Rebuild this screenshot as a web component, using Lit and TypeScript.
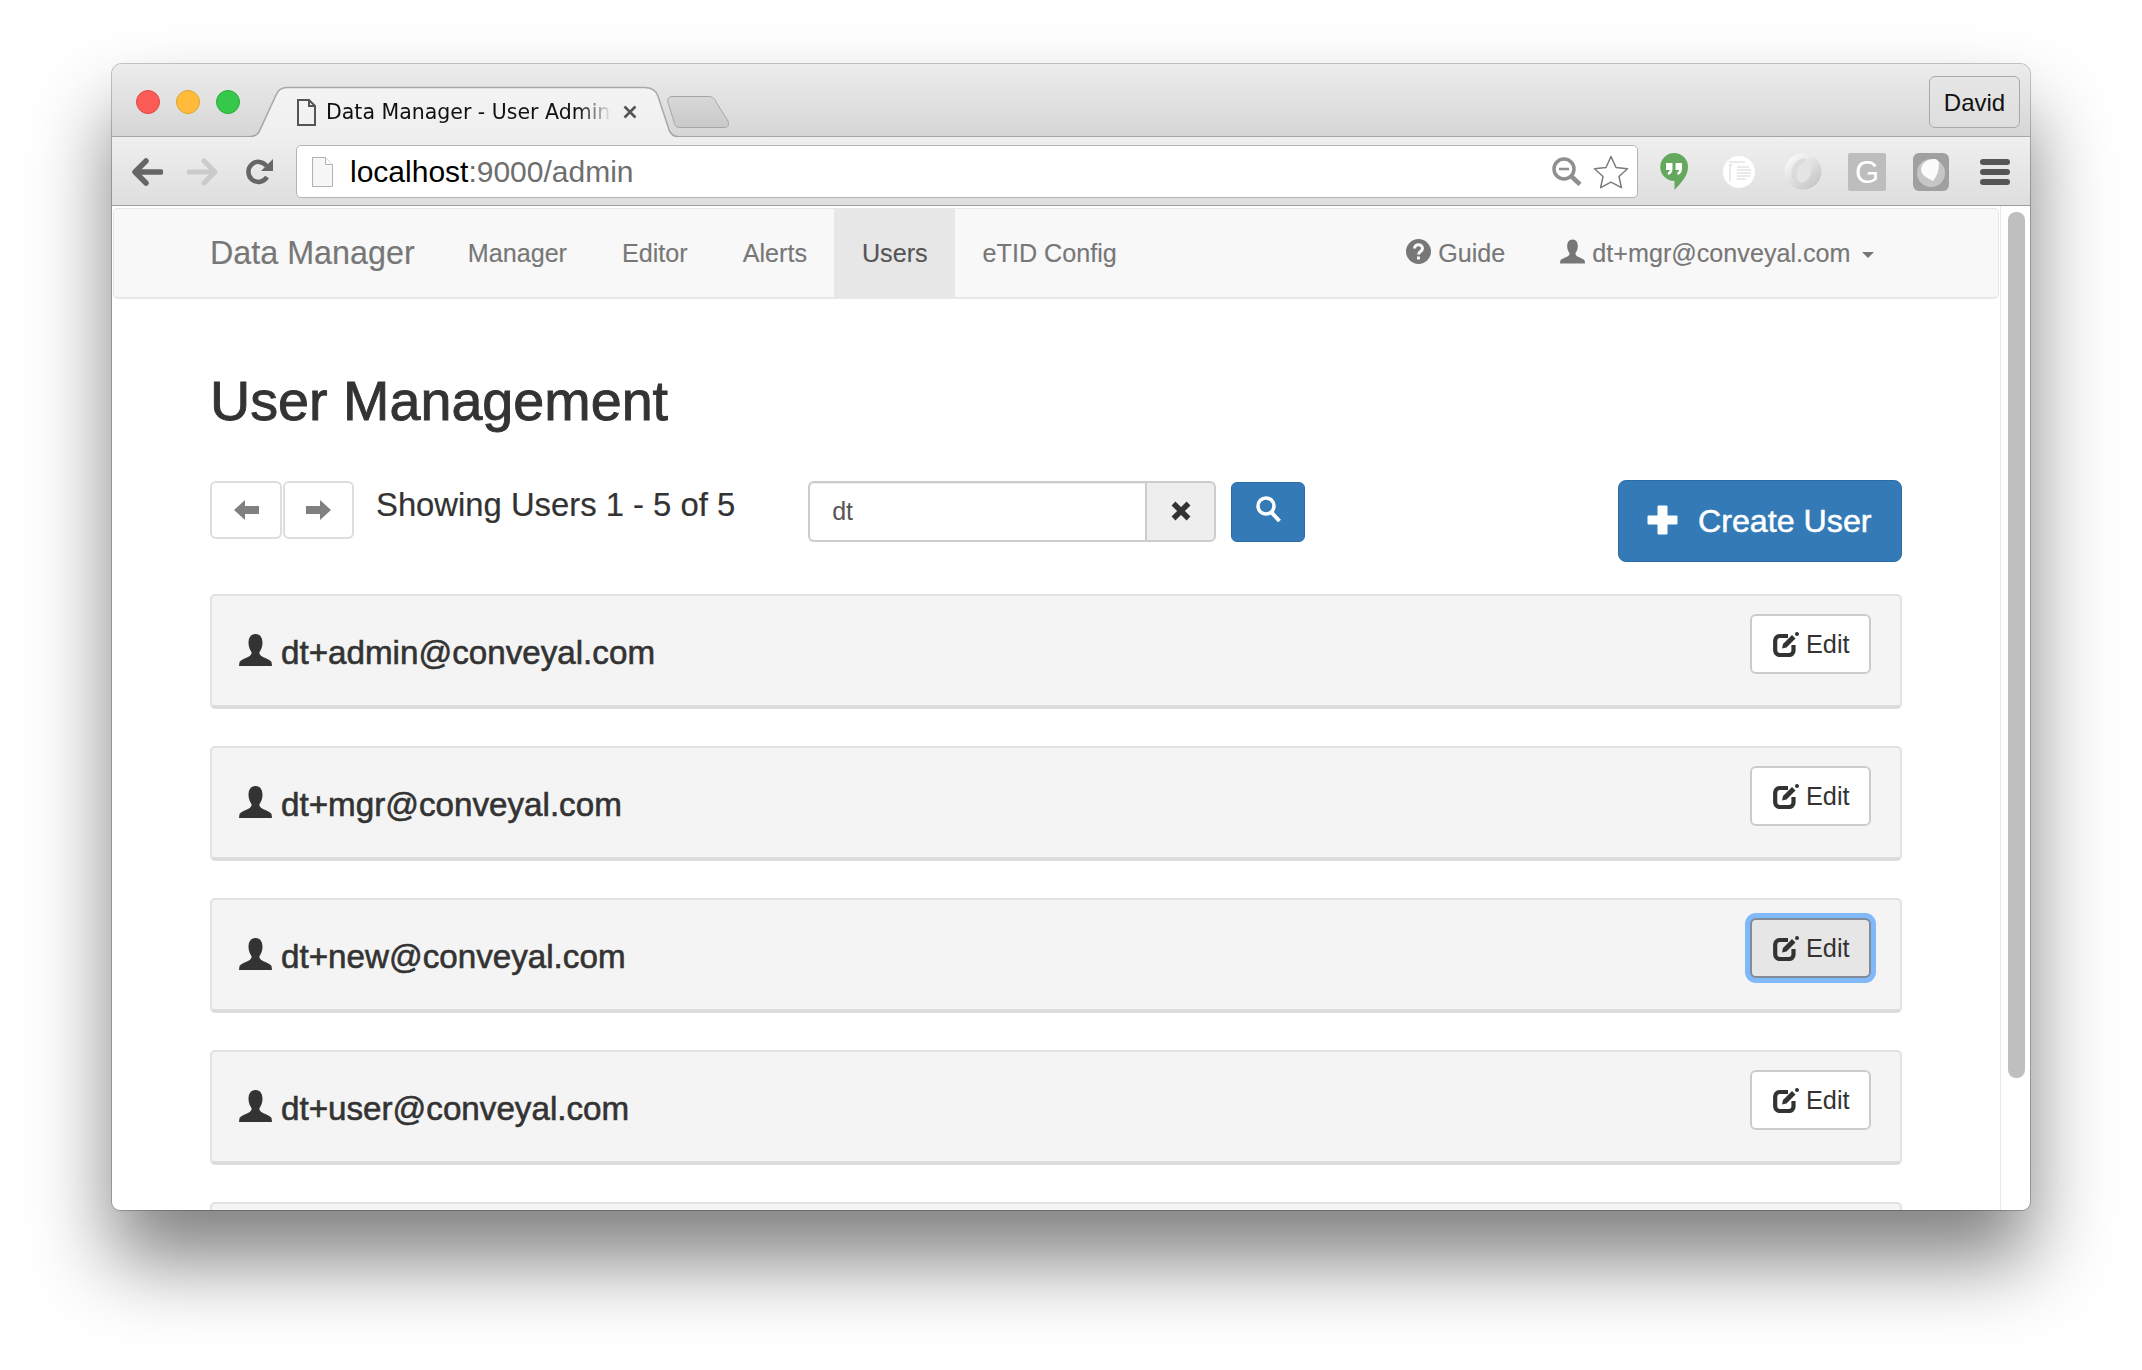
import { LitElement, html, css, svg } from "lit";
import { customElement } from "lit/decorators.js";
import { classMap } from "lit/directives/class-map.js";

const userIcon = svg`<path d="M16.5 0C11.5 0 9.5 4 9.5 9c0 4 1.500 7 3 9 .3 2-.5 3.500-3.500 5-4 2-7.500 3-8.500 5L0 32h33l-.5-4c-1-2-4.500-3-8.500-5-3-1.500-3.800-3-3.500-5 1.500-2 3-5 3-9 0-5-2-9-7-9z"/>`;

// the fifth row only shows its top edge above the window bottom, so it has no content
const USERS = [
  { email: "dt+admin@conveyal.com" },
  { email: "dt+mgr@conveyal.com" },
  { email: "dt+new@conveyal.com", focused: true },
  { email: "dt+user@conveyal.com" },
  { email: "" },
];

@customElement("app-root")
export class AppRoot extends LitElement {
  static styles = css`
    :host {
      display: block;
      width: 2142px;
      height: 1370px;
      padding: 64px 0 0 112px;
      box-sizing: border-box;
      background: #fff;
      overflow: hidden;
      font-family: "Liberation Sans", Arial, sans-serif;
      color: #333;
    }
    .window {
      width: 1918px;
      height: 1146px;
      display: flex;
      flex-direction: column;
      overflow: hidden;
      background: #fff;
      border-radius: 10px 10px 8px 8px;
      box-shadow: 0 0 0 1px rgba(0, 0, 0, 0.22), 0 50px 80px rgba(0, 0, 0, 0.5);
    }

    /* browser chrome */
    .titlebar {
      height: 73px;
      flex: none;
      box-sizing: border-box;
      display: flex;
      align-items: flex-end;
      background: linear-gradient(#ececec, #d6d6d6);
      border-bottom: 1px solid #a6a6a6;
    }
    .lights {
      display: flex;
      gap: 16px;
      align-self: flex-start;
      margin: 26px 10px 0 24px;
    }
    .light {
      width: 24px;
      height: 24px;
      box-sizing: border-box;
      border-radius: 50%;
      border: 1px solid;
    }
    .light.red { background: #fc5b57; border-color: #e2463f; }
    .light.yellow { background: #ffbb39; border-color: #e0a42b; }
    .light.green { background: #36c84b; border-color: #2aab3a; }
    .tab {
      position: relative;
      width: 428px;
      height: 50px;
      margin-bottom: -1px;
      display: flex;
      align-items: center;
      padding-left: 47px;
      box-sizing: border-box;
      flex: none;
    }
    .tab-shape {
      position: absolute;
      left: 0;
      top: 0;
      overflow: visible;
    }
    .tab-doc { position: relative; flex: none; }
    .tab-title {
      position: relative;
      width: 286px;
      margin-left: 10px;
      flex: none;
      overflow: hidden;
      white-space: nowrap;
      font: 20.5px "DejaVu Sans", sans-serif;
      color: #111;
      -webkit-mask-image: linear-gradient(90deg, #000 88%, transparent);
      mask-image: linear-gradient(90deg, #000 88%, transparent);
    }
    .tab-close { position: relative; margin-left: 10px; flex: none; }
    .newtab {
      flex: none;
      margin: 0 0 8px -12px;
    }
    .profile {
      margin: 0 10px 8px auto;
      width: 91px;
      height: 52px;
      box-sizing: border-box;
      display: flex;
      align-items: center;
      justify-content: center;
      padding-top: 2px;
      border: 1px solid #a9a9a9;
      border-radius: 6px;
      background: linear-gradient(#e6e6e6, #dedede);
      font-size: 24px;
      color: #111;
    }
    .toolbar {
      height: 69px;
      flex: none;
      box-sizing: border-box;
      display: flex;
      align-items: center;
      padding: 1px 0 0 20px;
      background: linear-gradient(#efefef, #dedede);
      border-bottom: 1px solid #9c9c9c;
    }
    .toolbar svg { flex: none; display: block; }
    .address {
      width: 1342px;
      height: 53px;
      flex: none;
      box-sizing: border-box;
      display: flex;
      align-items: center;
      padding: 0 8px 0 15px;
      margin-left: 23px;
      background: #fff;
      border: 1px solid #b4b4b4;
      border-radius: 5px;
      font-size: 30px;
      color: #6e6e6e;
    }
    .url { flex: 1; margin-left: 17px; white-space: nowrap; }
    .url b { font-weight: normal; color: #000; }
    .address .zoomic { margin-right: 11px; }
    .ext-hangouts { margin-left: 22px; }
    .ext-doc { margin-left: 35px; }
    .ext-swirl { margin-left: 29px; }
    .ext-g { margin-left: 26px; }
    .ext-shield { margin-left: 27px; }
    .ext-menu { margin-left: 31px; }
    .fwd { margin-left: 24px; }
    .reload { margin-left: 28px; }

    /* page viewport */
    .viewport {
      flex: 1;
      min-height: 0;
      display: flex;
    }
    .page {
      flex: 1;
      min-width: 0;
      overflow: hidden;
    }
    .scrollbar {
      width: 30px;
      flex: none;
      box-sizing: border-box;
      border-left: 1px solid #e8e8e8;
      padding: 6px 5px 0 7px;
    }
    .thumb {
      height: 866px;
      border-radius: 8px;
      background: #bfbfbf;
    }

    /* app navbar */
    .navbar {
      height: 91px;
      margin: 2px 1px 0;
      box-sizing: border-box;
      display: flex;
      align-items: stretch;
      padding: 0 97px 0 96px;
      background: #f8f8f8;
      border: solid #e7e7e7;
      border-width: 1px 1px 2px;
      border-radius: 5px;
      color: #777;
      font-size: 25.15px;
      -webkit-text-stroke: 0.15px #777;
    }
    .brand {
      font-size: 32.3px;
      margin-right: 25.6px;
      display: flex;
      align-items: center;
    }
    .nav-item {
      display: flex;
      align-items: center;
      padding: 0 27.500px;
      white-space: nowrap;
    }
    .nav-item.active { background: #e7e7e7; color: #555; -webkit-text-stroke-color: #555; }
    .nav-right { margin-left: auto; display: flex; }
    .nav-item svg { margin: -4px 7px 0 0; flex: none; }
    .caret {
      width: 0;
      height: 0;
      margin: 3px 0 0 11px;
      border-top: 6px solid #777;
      border-left: 6px solid transparent;
      border-right: 6px solid transparent;
    }

    /* user list */
    .content { padding: 0 98px 0 98px; }
    h1 {
      margin: 72px 0 49px;
      font-size: 55.7px;
      line-height: 60px;
      font-weight: normal;
      -webkit-text-stroke: 0.9px #333;
    }
    .controls {
      display: flex;
      align-items: flex-start;
      height: 82px;
      margin-bottom: 32px;
    }
    .pager {
      height: 58px;
      margin: 1px 0 0;
      box-sizing: border-box;
      display: flex;
      align-items: center;
      justify-content: center;
      background: #fff;
      border: 2px solid #ddd;
      border-radius: 6px;
    }
    .pager.prev { width: 72px; margin-right: 1px; }
    .pager.next { width: 71px; }
    .showing {
      margin-left: 22px;
      font-size: 32.8px;
      line-height: 50px;
      white-space: nowrap;
      -webkit-text-stroke: 0.2px #333;
    }
    .search {
      margin: 1px 0 0 73px;
      display: flex;
      height: 61px;
    }
    input {
      width: 337px;
      height: 61px;
      box-sizing: border-box;
      padding: 0 22px;
      font: 25px "Liberation Sans", Arial, sans-serif;
      color: #555;
      background: #fff;
      border: 2px solid #ccc;
      border-right: 0;
      border-radius: 6px 0 0 6px;
      box-shadow: inset 0 1px 1px rgba(0, 0, 0, 0.075);
      outline: none;
    }
    .clear {
      width: 71px;
      box-sizing: border-box;
      display: flex;
      align-items: center;
      justify-content: center;
      padding-bottom: 2px;
      background: #eee;
      border: 2px solid #ccc;
      border-radius: 0 6px 6px 0;
    }
    .go {
      width: 74px;
      height: 60px;
      margin: 2px 0 0 15px;
      box-sizing: border-box;
      display: flex;
      align-items: center;
      justify-content: center;
      padding-bottom: 6px;
      background: #337ab7;
      border: 1px solid #2e6da4;
      border-radius: 6px;
    }
    .create {
      margin-left: auto;
      width: 284px;
      height: 82px;
      box-sizing: border-box;
      display: flex;
      align-items: center;
      padding: 0 0 0 28px;
      background: #337ab7;
      border: 1px solid #2e6da4;
      border-radius: 8px;
      color: #fff;
      font-size: 32.2px;
      white-space: nowrap;
      -webkit-text-stroke: 0.5px #fff;
    }
    .create svg { margin-right: 20px; flex: none; margin-top: -2px; }
    .row {
      height: 115px;
      margin-bottom: 37px;
      box-sizing: border-box;
      display: flex;
      justify-content: space-between;
      align-items: flex-start;
      padding: 18px 29px 0 27px;
      background: #f4f4f4;
      border: 2px solid #e3e3e3;
      border-bottom: 4px solid #dcdcdc;
      border-radius: 5px;
    }
    .who {
      display: flex;
      align-items: flex-start;
      margin-top: 16px;
      font-size: 33.2px;
      line-height: 46px;
      -webkit-text-stroke: 0.6px #333;
    }
    .who svg { margin: 4px 9px 0 0; flex: none; fill: #333; stroke: none; }
    .edit {
      width: 121px;
      height: 60px;
      box-sizing: border-box;
      display: flex;
      align-items: center;
      padding-left: 21px;
      background: #fff;
      border: 2px solid #ccc;
      border-radius: 6px;
      font-size: 25.300px;
      color: #333;
    }
    .edit svg { margin-right: 7px; flex: none; }
    .edit.focused {
      background: #e6e6e6;
      border-color: #838b96;
      box-shadow: 0 0 0 5px #7fb9fa;
    }
  `;

  render() {
    return html`
      <div class="window">
        ${this.renderTitlebar()} ${this.renderToolbar()}
        <div class="viewport">
          <div class="page">
            ${this.renderNavbar()}
            <div class="content">
              <h1>User Management</h1>
              ${this.renderControls()}
              ${USERS.map((u) => this.renderRow(u))}
            </div>
          </div>
          <div class="scrollbar"><div class="thumb"></div></div>
        </div>
      </div>
    `;
  }

  renderTitlebar() {
    return html`
      <div class="titlebar">
        <div class="lights">
          <div class="light red"></div>
          <div class="light yellow"></div>
          <div class="light green"></div>
        </div>
        <div class="tab">
          <svg class="tab-shape" width="428" height="50" viewBox="0 0 428 49" preserveAspectRatio="none">
            <defs>
              <linearGradient id="tabfill" x1="0" y1="0" x2="0" y2="1">
                <stop offset="0" stop-color="#f4f4f4" />
                <stop offset="1" stop-color="#efefef" />
              </linearGradient>
            </defs>
            <path
              d="M0 49C5 49 8 47 10 42L26 8C28 3 31 0 37 0H394C401 0 406 3 408 9L419 42C421 47 424 49 428 49Z"
              fill="url(#tabfill)"
            />
            <path
              d="M0 48.500C5 48.500 8 47 10 42L26 8C28 3 31 .5 37 .5H394C401 .5 406 3 408 9L419 42C421 47 424 48.500 428 48.500"
              fill="none"
              stroke="#a8a8a8"
              stroke-width="1.500"
            />
          </svg>
          <svg class="tab-doc" width="19" height="27" viewBox="0 0 19 27">
            <path d="M1 1h11l6 6v19H1zM12 1v6h6" fill="none" stroke="#555" stroke-width="2" />
          </svg>
          <span class="tab-title">Data Manager - User Admin</span>
          <svg class="tab-close" width="16" height="16" viewBox="0 0 16 16">
            <path d="M2.500 2.500l11 11M13.500 2.500l-11 11" stroke="#555" stroke-width="2.600" />
          </svg>
        </div>
        <svg class="newtab" width="64" height="32" viewBox="0 0 64 32">
          <defs>
            <linearGradient id="ntfill" x1="0" y1="0" x2="0" y2="1">
              <stop offset="0" stop-color="#d8d8d8" />
              <stop offset="1" stop-color="#c9c9c9" />
            </linearGradient>
          </defs>
          <path
            d="M6 .5H42C47 .5 49 3 50 6L62 25C63.500 29 62 31.500 58 31.500H14C10.500 31.500 9 30 8 26L2 6C1 3 3 .5 6 .5Z"
            fill="url(#ntfill)"
            stroke="#a6a6a6"
          />
        </svg>
        <div class="profile">David</div>
      </div>
    `;
  }

  renderToolbar() {
    return html`
      <div class="toolbar">
        <svg width="31" height="28" viewBox="0 0 31 28">
          <path d="M14 3L3 14l11 11M4 14h25" fill="none" stroke="#666" stroke-width="5.500" stroke-linecap="round" stroke-linejoin="round" />
        </svg>
        <svg class="fwd" width="31" height="28" viewBox="0 0 31 28">
          <path d="M17 3l11 11-11 11M27 14H2" fill="none" stroke="#cbcbcb" stroke-width="5" stroke-linecap="round" stroke-linejoin="round" />
        </svg>
        <svg class="reload" width="27" height="27" viewBox="0 0 27 27">
          <path d="M20.500 8A10 10 0 1 0 21 19" fill="none" stroke="#666" stroke-width="4.500" />
          <path d="M27 1v12H15z" fill="#666" />
        </svg>
        <div class="address">
          <svg width="21" height="30" viewBox="0 0 21 30">
            <path d="M.5.5h13l7 7v22H.5z" fill="#f7f7f7" stroke="#b2b2b2" />
            <path d="M13.500.5v7h7" fill="#fff" stroke="#b2b2b2" />
          </svg>
          <span class="url"><b>localhost</b>:9000/admin</span>
          <svg class="zoomic" width="30" height="29" viewBox="0 0 30 29">
            <circle cx="12" cy="12" r="10" fill="none" stroke="#8f8f8f" stroke-width="3.500" />
            <path d="M7 12h10" stroke="#8f8f8f" stroke-width="2.500" />
            <path d="M19 19l9 8.500" stroke="#8f8f8f" stroke-width="4.500" />
          </svg>
          <svg width="36" height="34" viewBox="0 0 36 34">
            <path
              d="M18 1.500l5 11 11.500 1.300-8.500 7.700 2.400 11.200L18 27.200 7.600 32.700 10 21.500 1.500 13.800 13 12.500z"
              fill="#fff"
              stroke="#7b7b7b"
              stroke-width="1.500"
              stroke-linejoin="round"
            />
          </svg>
        </div>
        <svg class="ext-hangouts" width="28" height="37" viewBox="0 0 28 37">
          <path d="M14 0a14 14 0 0 1 14 14c0 9-7 16-13.500 23V28A14 14 0 0 1 14 0z" fill="#63a85d" />
          <path d="M6 10h6.500v6c0 3-1.500 5-4 6l-1-2c1.500-.8 2-1.800 2-3H6zM15.500 10H22v6c0 3-1.500 5-4 6l-1-2c1.500-.8 2-1.800 2-3h-3.500z" fill="#fff" />
        </svg>
        <svg class="ext-doc" width="32" height="32" viewBox="0 0 32 32">
          <circle cx="16" cy="16" r="16" fill="#fff" />
          <path d="M6 6h16M6 9h3M14 11h12M14 14h14M14 17h14M14 20h13M14 23h9M7 9v16" stroke="#d6d6d6" stroke-width="1" />
        </svg>
        <svg class="ext-swirl" width="38" height="37" viewBox="0 0 38 37">
          <defs>
            <linearGradient id="sw" x1="0.2" y1="0" x2="0.9" y2="0.8">
              <stop offset="0" stop-color="#fbfbfb" />
              <stop offset="1" stop-color="#c8c8c8" />
            </linearGradient>
          </defs>
          <ellipse cx="19" cy="18.500" rx="18.500" ry="18" fill="url(#sw)" />
          <path d="M20 5C10 7 6 16 8 24c2 6 8 9 14 9-6-3-10-7-9-13 1-6 4-10 9-12z" fill="#d6d6d6" opacity="0.7" />
          <ellipse cx="20" cy="19" rx="7" ry="11" transform="rotate(20 20 19)" fill="#e4e4e4" />
        </svg>
        <svg class="ext-g" width="38" height="38" viewBox="0 0 38 38">
          <rect width="38" height="38" rx="2" fill="#bdbdbd" />
          <text x="19" y="30" text-anchor="middle" font-family="Liberation Sans, sans-serif" font-size="31" fill="#fff">G</text>
        </svg>
        <svg class="ext-shield" width="36" height="38" viewBox="0 0 36 38">
          <rect width="36" height="38" rx="6" fill="#a0a0a0" />
          <circle cx="18" cy="20" r="14" fill="#c6c6c6" />
          <path d="M8 16C9 10 14 6 21 6c3 0 5 2 5 5 0 6-2 12-6 17C14 25 8 22 8 16z" fill="#fbfbfb" />
        </svg>
        <svg class="ext-menu" width="30" height="26" viewBox="0 0 30 26">
          <rect width="30" height="6" rx="3" fill="#555" />
          <rect y="10" width="30" height="6" rx="3" fill="#555" />
          <rect y="20" width="30" height="6" rx="3" fill="#555" />
        </svg>
      </div>
    `;
  }

  renderNavbar() {
    return html`
      <nav class="navbar">
        <div class="brand">Data Manager</div>
        <div class="nav-item">Manager</div>
        <div class="nav-item">Editor</div>
        <div class="nav-item">Alerts</div>
        <div class="nav-item active">Users</div>
        <div class="nav-item">eTID Config</div>
        <div class="nav-right">
          <div class="nav-item">
            <svg width="25" height="25" viewBox="0 0 25 25">
              <circle cx="12.500" cy="12.500" r="12.500" fill="#777" />
              <path d="M8.500 9.500c0-5 8-5 8 0 0 3-4 3-4 6" fill="none" stroke="#f8f8f8" stroke-width="3" />
              <rect x="11" y="17.500" width="3" height="3" fill="#f8f8f8" />
            </svg>
            Guide
          </div>
          <div class="nav-item">
            <svg width="25" height="25" viewBox="0 0 33 32" fill="#777">${userIcon}</svg>
            dt+mgr@conveyal.com
            <span class="caret"></span>
          </div>
        </div>
      </nav>
    `;
  }

  renderControls() {
    return html`
      <div class="controls">
        <div class="pager prev">
          <svg width="25" height="20" viewBox="0 0 25 20">
            <path d="M0 10L11 0v6h14v8H11v6z" fill="#808080" />
          </svg>
        </div>
        <div class="pager next">
          <svg width="25" height="20" viewBox="0 0 25 20">
            <path d="M25 10L14 0v6H0v8h14v6z" fill="#808080" />
          </svg>
        </div>
        <div class="showing">Showing Users 1 - 5 of 5</div>
        <div class="search">
          <input .value=${"dt"} />
          <div class="clear">
            <svg width="22" height="22" viewBox="0 0 22 22">
              <path d="M3.500 3.500l15 15M18.500 3.500l-15 15" stroke="#333" stroke-width="5.500" />
            </svg>
          </div>
        </div>
        <div class="go">
          <svg width="25" height="26" viewBox="0 0 25 26">
            <circle cx="10" cy="10" r="8" fill="none" stroke="#fff" stroke-width="3.500" />
            <path d="M15.500 16.500l8 8.500" stroke="#fff" stroke-width="4" />
          </svg>
        </div>
        <div class="create">
          <svg width="31" height="30" viewBox="0 0 31 30">
            <path d="M11 1h9v10h10v8H20v10h-9V19H1v-8h10z" fill="#fff" stroke="#fff" stroke-linejoin="round" />
          </svg>
          Create User
        </div>
      </div>
    `;
  }

  renderRow(u: { email: string; focused?: boolean }) {
    if (!u.email) return html`<div class="row"></div>`;
    return html`
      <div class="row">
        <div class="who">
          <svg width="33" height="32" viewBox="0 0 33 32">${userIcon}</svg>
          ${u.email}
        </div>
        <div class=${classMap({ edit: true, focused: !!u.focused })}>
          <svg width="26" height="25" viewBox="0 0 26 25">
            <path d="M15 4H6.500A4.500 4.500 0 0 0 2.200 8.500V18.500A4.500 4.500 0 0 0 6.500 23H16a4.500 4.500 0 0 0 4.500-4.500V13" fill="none" stroke="#333" stroke-width="4.200" />
            <path d="M9 16.500l1-4.500L19 3l3.500 3.500-9 9z" fill="#333" />
            <circle cx="24" cy="2" r="2" fill="#333" />
          </svg>
          Edit
        </div>
      </div>
    `;
  }
}
